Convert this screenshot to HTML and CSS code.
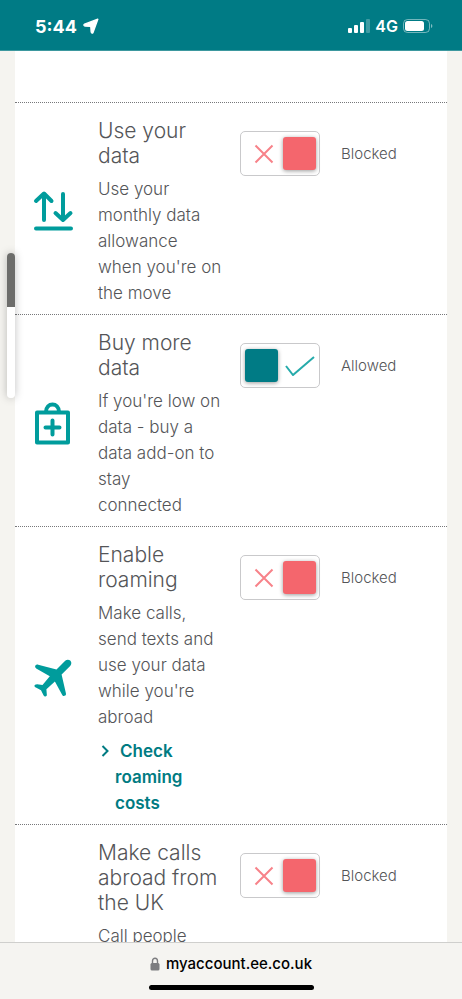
FILE: index.html
```html
<!DOCTYPE html>
<html lang="en">
<head>
<meta charset="utf-8">
<meta name="viewport" content="width=device-width, initial-scale=1">
<title>My account</title>
<link rel="stylesheet" href="styles.css">
</head>
<body>
<header class="status">
  <div class="status-group">
    <span class="time">5:44</span>
    <svg width="16" height="16" viewBox="0 0 16 16"><path d="M14.800 1.200 10 14.500Q9 16 8.200 14L7.800 8.400 2 8Q0 7.200 1.600 6.200Z" fill="#fff" stroke="#fff" stroke-width="1.400" stroke-linejoin="round"/></svg>
  </div>
  <div class="status-group status-right">
    <svg width="22" height="14" viewBox="0 0 22 14" fill="#fff"><rect y="9" width="4" height="5" rx="1"/><rect x="6" y="6" width="4" height="8" rx="1"/><rect x="12" y="3" width="4" height="11" rx="1"/><rect x="18" width="4" height="14" rx="1" opacity=".25"/></svg>
    <span class="network">4G</span>
    <svg width="30" height="14" viewBox="0 0 30 14"><rect x=".5" y=".5" width="26" height="13" rx="4" fill="none" stroke="#fff" opacity=".45"/><rect x="2" y="2" width="19" height="10" rx="2.5" fill="#fff"/><path d="M28 5q1.4.7 1.4 2T28 9z" fill="#fff" opacity=".5"/></svg>
  </div>
</header>

<main class="page">
  <div class="card">
    <section class="row">
      <div class="icon"><svg width="42" height="42" viewBox="0 0 42 42" fill="none" stroke="#009c9c" stroke-width="4" stroke-linecap="round" stroke-linejoin="round"><path d="M12 30V4M4 11l8-7.500L19.500 11M31 4v26M23.500 23l7.500 7L38.500 23M4 38.500h35"/></svg></div>
      <div class="text">
        <h2>Use your data</h2>
        <p id="d1">Use your monthly data allowance when you're on the move</p>
      </div>
      <label class="control">
        <span class="toggle"><input type="checkbox" aria-describedby="d1"><svg class="mark" width="20" height="20" viewBox="0 0 20 20"><path d="m1.500 1.500 17 17m0-17-17 17"/></svg><span class="knob"></span></span>
        <span>Blocked</span>
      </label>
    </section>

    <section class="row">
      <div class="icon"><svg width="42" height="46" viewBox="0 0 42 46" fill="none" stroke="#009c9c" stroke-width="4" stroke-linecap="round" stroke-linejoin="round"><path d="M5 12.500h31v30H5zM20.500 20.500v14M13.500 27.500h14"/><path d="M14 12c0-10 13-10 13 0"/></svg></div>
      <div class="text">
        <h2>Buy more data</h2>
        <p id="d2">If you're low on data - buy a data add-on to stay<br>connected</p>
      </div>
      <label class="control">
        <span class="toggle on"><span class="knob"></span><input type="checkbox" checked aria-describedby="d2"><svg class="mark" width="30" height="20" viewBox="0 0 30 20"><path d="m1 10 7 9L29 1"/></svg></span>
        <span>Allowed</span>
      </label>
    </section>

    <section class="row">
      <div class="icon"><svg width="38" height="38" viewBox="0 0 38 38"><path d="M36.200 1.600c-1.500-1.400-3.600-1.200-5 .2L22.500 10.400 4.200 5.700c-1.400-.3-2.500.3-3 1.400-.3 1 .1 1.800 1 2.300l13.600 7.800-7.300 8.700-5.300-.7C1.400 25.200.3 26 .5 27c.1.800.6 1.200 1.400 1.500l5.100 2.700 2.500 5c.6 1.100 1.500 1.500 2.400 1 .9-.4 1.100-1.200.9-2l-.4-5 8.500-7.600 7.200 13.100c.5 1 1.400 1.500 2.500 1.100s1.600-1.300 1.300-2.600L27.600 15.600l8.600-8.700c1.500-1.500 1.500-3.900 0-5.300z" fill="#009c9c"/></svg></div>
      <div class="text">
        <h2>Enable roaming</h2>
        <p id="d3">Make calls, send texts and use your data while you're abroad</p>
        <a class="more" href="#costs"><svg width="8" height="12" viewBox="0 0 8 12"><path d="m1.500 1 5 5-5 5" fill="none" stroke="#007b82" stroke-width="2"/></svg>Check roaming costs</a>
      </div>
      <label class="control">
        <span class="toggle"><input type="checkbox" aria-describedby="d3"><svg class="mark" width="20" height="20" viewBox="0 0 20 20"><path d="m1.500 1.500 17 17m0-17-17 17"/></svg><span class="knob"></span></span>
        <span>Blocked</span>
      </label>
    </section>

    <section class="row">
      <div class="icon"></div>
      <div class="text">
        <h2>Make calls abroad from the UK</h2>
        <p id="d4">Call people</p>
      </div>
      <label class="control">
        <span class="toggle"><input type="checkbox" aria-describedby="d4"><svg class="mark" width="20" height="20" viewBox="0 0 20 20"><path d="m1.500 1.500 17 17m0-17-17 17"/></svg><span class="knob"></span></span>
        <span>Blocked</span>
      </label>
    </section>
  </div>
  <div class="scroll-marker"></div>
</main>

<footer class="browser">
  <div class="address">
    <svg width="10" height="14" viewBox="0 0 10 14"><rect x=".5" y="6" width="9" height="7.500" rx="1.500" fill="#7d7d80"/><path d="M2.500 7V4a2.500 2.800 0 0 1 5 0v3" fill="none" stroke="#7d7d80" stroke-width="1.400"/></svg>
    <span>myaccount.ee.co.uk</span>
  </div>
  <div class="home"></div>
</footer>
</body>
</html>
```
FILE: styles.css
```css
* { box-sizing: border-box; }

body {
  margin: 0;
  height: 100vh;
  display: flex;
  flex-direction: column;
  background: #f5f4f0;
  color: #545558;
  font-family: Inter, "Liberation Sans", sans-serif;
}

.status {
  flex: none;
  height: 51px;
  padding: 2px 29px 0 35px;
  display: flex;
  align-items: center;
  justify-content: space-between;
  background: #007b85;
  border-bottom: 1px solid #3d989f;
  color: #fff;
}

.status-group { display: flex; align-items: center; gap: 6px; }
.status-right { gap: 5px; }
.time { font-size: 18px; font-weight: 700; }
.network { font-size: 16px; font-weight: 600; }

.page {
  flex: 1;
  min-height: 0;
  overflow: hidden;
  position: relative;
}

.card {
  min-height: 100%;
  margin: 0 15px;
  padding-top: 51px;
  background: #fff;
}

.row {
  display: grid;
  grid-template-columns: 76px 1fr 207px;
  border-top: 1px dotted #77787a;
}

.icon {
  display: flex;
  align-items: center;
  justify-content: center;
  padding-top: 4px;
}

.text { padding: 15px 16px 8px 7px; }

h2, p { margin: 0; }

h2 {
  margin-bottom: 8px;
  font-size: 21px;
  line-height: 25px;
  font-weight: 300;
}

p {
  font-size: 17px;
  line-height: 26px;
  font-weight: 300;
}

.more {
  display: block;
  margin-top: 8px;
  padding-left: 17px;
  text-indent: -14px;
  font-size: 17px;
  line-height: 26px;
  font-weight: 600;
  color: #007b82;
  text-decoration: none;
}

.more svg { margin-right: 11px; }

.control {
  align-self: start;
  margin-top: 28px;
  display: flex;
  align-items: center;
  gap: 21px;
  font-size: 15px;
  font-weight: 300;
}

.toggle {
  position: relative;
  width: 80px;
  height: 45px;
  padding: 0 4px 0 14px;
  display: flex;
  align-items: center;
  justify-content: space-between;
}

.toggle.on { padding: 0 5px; }

.toggle input {
  position: absolute;
  inset: 0;
  margin: 0;
  appearance: none;
  border: 1px solid #c9c9cb;
  border-radius: 5px;
}

.knob {
  width: 33px;
  height: 33px;
  border-radius: 3px;
  background: #f4666d;
  box-shadow: 0 1px 4px rgba(0, 0, 0, .4);
}

.on .knob { background: #007b85; }

.mark { fill: none; stroke: #f78289; stroke-width: 2; }
.on .mark { stroke: #26abab; }

.scroll-marker {
  position: absolute;
  left: 7px;
  top: 202px;
  width: 8px;
  height: 145px;
  border-radius: 4px;
  background: linear-gradient(#6d6d6b 54px, #fff 54px);
  box-shadow: 0 0 8px rgba(0, 0, 0, .25);
}

.browser {
  flex: none;
  height: 57px;
  padding: 11px 0 9px;
  display: flex;
  flex-direction: column;
  align-items: center;
  justify-content: space-between;
  border-top: 1px solid #cfcfcd;
  background: #f5f4f1;
  color: #000;
}

.address {
  display: flex;
  align-items: center;
  gap: 6px;
  font-size: 15px;
  line-height: 20px;
  font-weight: 500;
}

.home {
  width: 165px;
  height: 5px;
  border-radius: 3px;
  background: #000;
}
```
